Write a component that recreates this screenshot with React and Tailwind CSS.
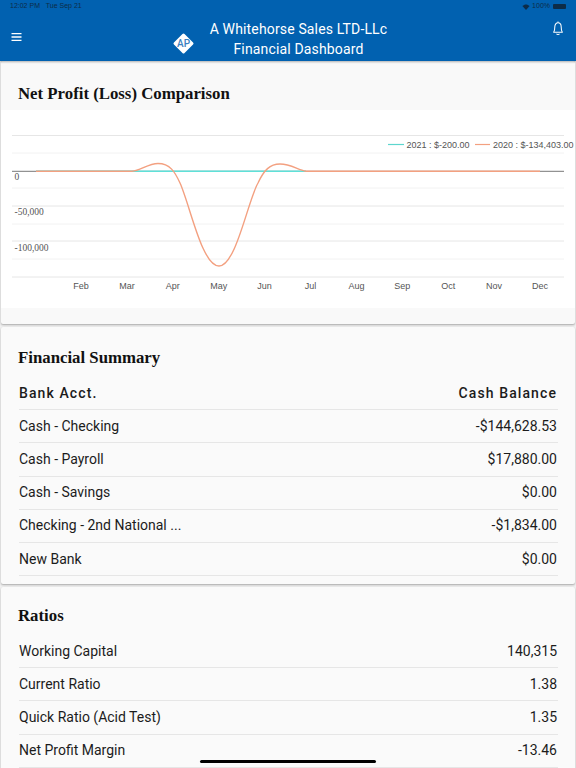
import React from "react";

const months = ["Feb","Mar","Apr","May","Jun","Jul","Aug","Sep","Oct","Nov","Dec"];
const sans = { fontFamily: "'Liberation Sans', sans-serif" };

function Chart() {
  const major = [135.5, 206, 241, 277];
  const minor = [153, 188, 224, 259];
  return (
    <svg width="574" height="198" viewBox="1 110 574 198" className="block bg-white">
      {minor.map((y) => <line key={y} x1="12" x2="564" y1={y} y2={y} stroke="#f2f2f2" strokeWidth="1" />)}
      {major.map((y) => <line key={y} x1="12" x2="564" y1={y} y2={y} stroke="#e6e6e6" strokeWidth="1" />)}
      <line x1="12" x2="564" y1="171.3" y2="171.3" stroke="#777777" strokeWidth="1" />
      <line x1="36" x2="306" y1="171.3" y2="171.3" stroke="#5fe0d8" strokeWidth="1.4" />
      <path d="M36 171.2 L132 171.2 C140 171 148 163.5 158 163.5 C170 163.5 175 172 180 183 C190 205 202 266 219 266 C236 266 248 200 258 183 C264 170 270 164 280 164 C291 164 298 170 306 171.2 L540 171.2" fill="none" stroke="#f3a080" strokeWidth="1.4" />
      <g fontFamily="'Liberation Serif', serif" fontSize="9.5" fill="#555555">
        <text x="14.5" y="180">0</text>
        <text x="14.5" y="215">-50,000</text>
        <text x="14.5" y="250.5">-100,000</text>
      </g>
      <g fontFamily="'Liberation Sans', sans-serif" fontSize="9" fill="#555555" textAnchor="middle">
        {months.map((m, i) => <text key={m} x={81 + i * 45.9} y="289">{m}</text>)}
      </g>
      <line x1="388" x2="404" y1="144.5" y2="144.5" stroke="#5dd6ce" strokeWidth="1.2" />
      <line x1="475" x2="490" y1="144.5" y2="144.5" stroke="#f3a080" strokeWidth="1.2" />
      <g fontFamily="'Liberation Sans', sans-serif" fontSize="9" fill="#555555">
        <text x="406.5" y="148">2021 : $-200.00</text>
        <text x="493" y="148">2020 : $-134,403.00</text>
      </g>
    </svg>
  );
}

function Title({ children, className }) {
  return (
    <h2 className={`text-[16.8px] font-bold text-[#111] leading-5 pl-[17px] ${className}`} style={{ fontFamily: "'Liberation Serif', serif" }}>
      {children}
    </h2>
  );
}

function Row({ left, right, head }) {
  return (
    <div className={`flex h-[33.2px] items-center justify-between border-b border-[#e6e6e6] pr-[1px] ${head ? "font-medium tracking-[1.1px]" : ""}`}>
      <span>{left}</span>
      <span>{right}</span>
    </div>
  );
}

export default function App() {
  return (
    <div className="relative h-[768px] w-[576px] overflow-hidden bg-[#f0f0f0]" style={{ fontFamily: "Roboto, sans-serif" }}>
      <header className="relative h-[61px] bg-[#0161b0] text-white shadow-[0_1px_2px_rgba(0,0,0,0.3)]">
        <div className="flex h-[13px] items-center justify-between pl-[10px] pr-[10px] text-[7px] text-[#0d2c48]" style={sans}>
          <span className="font-medium">12:02 PM&nbsp;&nbsp;&nbsp;Tue Sep 21</span>
          <span className="flex items-center gap-[2px]">
            <svg width="8" height="6" viewBox="0 0 12 10" fill="#0d2c48"><path d="M6 10 L0 3.5 C3.5 0 8.5 0 12 3.5 Z" /></svg>
            <span>100%</span>
            <span className="ml-[1px] h-[4.5px] w-[13px] rounded-[1px] bg-[#0d2c48]" />
          </span>
        </div>
        <div className="relative flex h-[48px] items-start justify-between px-[10px]">
          <svg className="mt-[19px]" width="12" height="10" viewBox="0 0 12 10" fill="none" stroke="white" strokeWidth="1.3">
            <path d="M1.5 1.7H11.5M1.5 5H11.5M1.5 8.3H11.5" />
          </svg>
          <div className="flex flex-col items-center pr-[34px] pt-[5.5px] text-[14px] leading-[20.5px] tracking-[0.15px]">
            <div className="pl-[58px]">A Whitehorse Sales LTD-LLc</div>
            <div className="pl-[58px]">Financial Dashboard</div>
          </div>
          <svg className="mr-[1px] mt-[8px]" width="14" height="15" viewBox="0 0 24 26" fill="none" stroke="white" strokeWidth="1.8">
            <path d="M12 1 V3 M4.5 19.5 C6.5 16.5 6.5 14 6.5 10 C6.5 6 9 3 12 3 C15 3 17.5 6 17.5 10 C17.5 14 17.5 16.5 19.5 19.5 Z" strokeLinejoin="round" />
            <path d="M9.5 22 C10.5 24 13.5 24 14.5 22" />
          </svg>
          <div className="absolute left-[175.5px] top-[22.5px] flex h-[15px] w-[15px] rotate-45 items-center justify-center rounded-[1.5px] bg-white">
            <span className="-rotate-45 text-[10px] font-medium text-[#3b7fc0]">AP</span>
          </div>
        </div>
      </header>

      <main className="flex flex-col gap-[3px] px-[1px]">
        <section className="h-[263px] rounded-[2px] bg-[#f9f9f9] shadow-[0_1px_2px_rgba(0,0,0,0.3)]">
          <Title className="pt-[23px] pb-[6px]">Net Profit (Loss) Comparison</Title>
          <Chart />
        </section>

        <section className="h-[257px] rounded-[2px] bg-[#fafafa] shadow-[0_1px_2px_rgba(0,0,0,0.3)]">
          <Title className="pt-[21px] pb-[9px]">Financial Summary</Title>
          <div className="pl-[18px] pr-[17px] text-[14px] text-[#1c1c1c]">
            <Row head left="Bank Acct." right="Cash Balance" />
            <Row left="Cash - Checking" right="-$144,628.53" />
            <Row left="Cash - Payroll" right="$17,880.00" />
            <Row left="Cash - Savings" right="$0.00" />
            <Row left="Checking - 2nd National ..." right="-$1,834.00" />
            <Row left="New Bank" right="$0.00" />
          </div>
        </section>

        <section className="h-[200px] rounded-[2px] bg-[#fafafa] shadow-[0_1px_2px_rgba(0,0,0,0.3)]">
          <Title className="pt-[19px] pb-[9px]">Ratios</Title>
          <div className="pl-[18px] pr-[17px] text-[14px] text-[#1c1c1c]">
            <Row left="Working Capital" right="140,315" />
            <Row left="Current Ratio" right="1.38" />
            <Row left="Quick Ratio (Acid Test)" right="1.35" />
            <Row left="Net Profit Margin" right="-13.46" />
          </div>
        </section>
      </main>

      <div className="absolute bottom-[5px] left-[200px] h-[3px] w-[176px] rounded-full bg-black" />
    </div>
  );
}
